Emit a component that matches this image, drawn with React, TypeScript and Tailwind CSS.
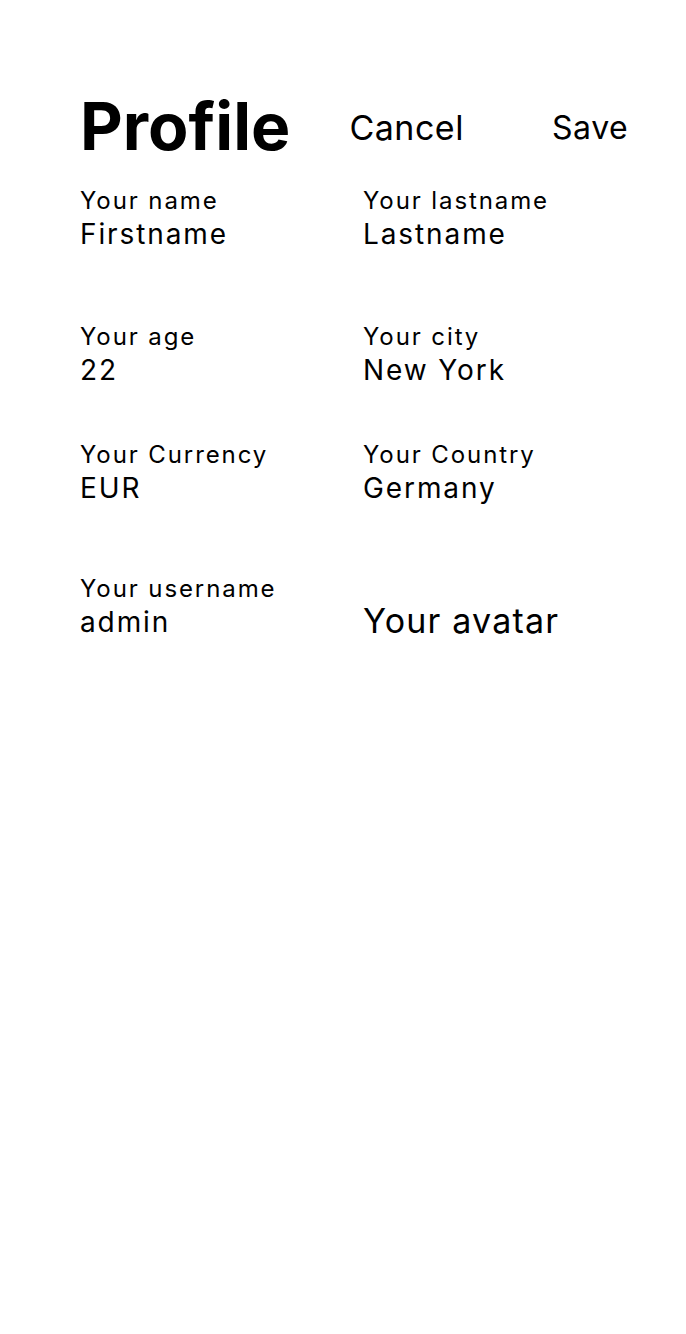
import React from "react";

function Field({ label, value }: { label: string; value: string }) {
  return (
    <div className="flex flex-col">
      <span className="text-[24px] leading-[30px] tracking-[1.9px]">{label}</span>
      <span className="text-[28px] leading-[36px] tracking-[1.9px]">{value}</span>
    </div>
  );
}

export default function App() {
  return (
    <div
      className="min-h-screen bg-white text-black"
      style={{ fontFamily: "Inter, 'Noto Sans', sans-serif" }}
    >
      <div className="pl-[80px] pt-[86px]">
        {/* Header */}
        <div className="flex items-center">
          <h1 className="text-[66px] leading-[80px] font-bold">Profile</h1>
          <button className="ml-[59px] text-[34px] leading-[40px] tracking-[0.5px] mt-[4px]">Cancel</button>
          <button className="ml-[88px] text-[32px] leading-[40px] tracking-[0.6px] mt-[4px]">Save</button>
        </div>

        {/* Fields */}
        <div className="grid grid-cols-[283px_1fr] mt-[20px]">
          <Field label="Your name" value="Firstname" />
          <Field label="Your lastname" value="Lastname" />

          <div className="mt-[70px]">
            <Field label="Your age" value="22" />
          </div>
          <div className="mt-[70px]">
            <Field label="Your city" value="New York" />
          </div>

          <div className="mt-[52px]">
            <Field label="Your Currency" value="EUR" />
          </div>
          <div className="mt-[52px]">
            <Field label="Your Country" value="Germany" />
          </div>

          <div className="mt-[68px]">
            <Field label="Your username" value="admin" />
          </div>
          <div className="mt-[68px] flex items-end">
            <span className="text-[34px] leading-[40px] tracking-[1.2px] mb-[-1px]">Your avatar</span>
          </div>
        </div>
      </div>
    </div>
  );
}
